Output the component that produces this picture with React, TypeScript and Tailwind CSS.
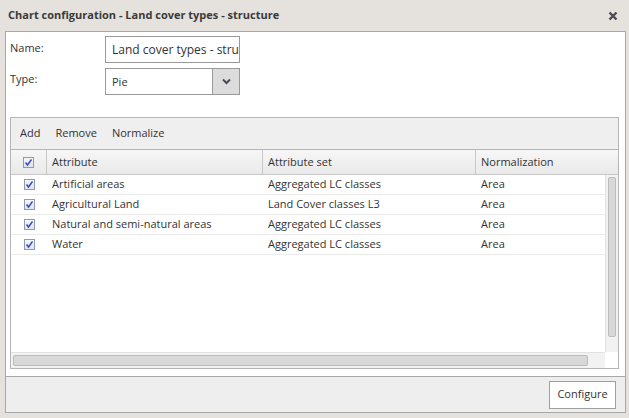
import React from 'react';

const rows = [
  { attr: 'Artificial areas', set: 'Aggregated LC classes', norm: 'Area' },
  { attr: 'Agricultural Land', set: 'Land Cover classes L3', norm: 'Area' },
  { attr: 'Natural and semi-natural areas', set: 'Aggregated LC classes', norm: 'Area' },
  { attr: 'Water', set: 'Aggregated LC classes', norm: 'Area' },
];

const Check = () => (
  <div className="w-[11px] h-[11px] border border-[#8e9bb3] bg-gradient-to-b from-[#f4f6fa] to-[#dde3ec] flex items-center justify-center">
    <svg width="9" height="9" viewBox="0 0 9 9">
      <path d="M1.5 4.5 L3.5 7 L7.5 1.5" fill="none" stroke="#3347c0" strokeWidth="1.4" />
    </svg>
  </div>
);

const App = () => {
  return (
    <div
      className="w-[629px] h-[418px] bg-[#e5e1dd] flex flex-col pl-[5px] pr-[3px] text-[#333] text-[11px]"
      style={{ fontFamily: '"Open Sans", "Liberation Sans", sans-serif' }}
    >
      <div className="h-[31px] flex items-center justify-between pl-[3px] pr-[8px]">
        <span className="font-bold text-[11px] text-[#3a3a3a]">Chart configuration - Land cover types - structure</span>
        <svg width="10" height="10" viewBox="0 0 10 10">
          <path d="M1.5 1.5 L8.5 8.5 M8.5 1.5 L1.5 8.5" stroke="#4a4a55" strokeWidth="2.4" />
        </svg>
      </div>

      <div className="h-[346px] border border-[#a8a8a8] bg-white flex flex-col pl-[4px] pr-[6px] pt-[4px]">
        <div className="flex h-[27px]">
          <div className="w-[95px] pt-[4px]">Name:</div>
          <input
            readOnly
            value="Land cover types - structure"
            className="w-[135px] h-[27px] border border-[#9a9a9a] pl-[6px] text-[12px] text-[#333] outline-none"
            style={{ fontFamily: '"Open Sans", "Liberation Sans", sans-serif' }}
          />
        </div>
        <div className="flex h-[27px] mt-[5px]">
          <div className="w-[95px] pt-[3px]">Type:</div>
          <div className="w-[135px] border border-[#9a9a9a] flex">
            <div className="flex-1 flex items-center pl-[6px] pt-[2px]">Pie</div>
            <div className="w-[27px] border-l border-[#9a9a9a] bg-[#dcdcdc] flex items-center justify-center">
              <svg width="9" height="7" viewBox="0 0 9 7">
                <path d="M1 1.5 L4.5 5 L8 1.5" fill="none" stroke="#4a4a55" strokeWidth="2" />
              </svg>
            </div>
          </div>
        </div>

        <div className="mt-[22px] h-[252px] border border-[#b5b5b5] flex flex-col">
          <div className="h-[32px] bg-[#efefef] flex items-center gap-[15px] pl-[9px] border-b border-[#b5b5b5]">
            <span>Add</span>
            <span>Remove</span>
            <span>Normalize</span>
          </div>
          <div className="h-[25px] flex bg-gradient-to-b from-[#f7f7f7] to-[#e9e9e9] border-b border-[#c8c8c8]">
            <div className="w-[36px] border-r border-[#c8c8c8] flex items-center justify-center">
              <Check />
            </div>
            <div className="w-[216px] border-r border-[#c8c8c8] flex items-center pl-[5px]">Attribute</div>
            <div className="w-[213px] border-r border-[#c8c8c8] flex items-center pl-[5px]">Attribute set</div>
            <div className="flex-1 flex items-center pl-[5px]">Normalization</div>
          </div>
          <div className="flex-1 flex min-h-0">
            <div className="flex-1 flex flex-col">
              {rows.map((r) => (
                <div key={r.attr} className="h-[20px] flex border-b border-[#ececec]">
                  <div className="w-[36px] flex items-center justify-center">
                    <Check />
                  </div>
                  <div className="w-[216px] flex items-center pl-[5px]">{r.attr}</div>
                  <div className="w-[213px] flex items-center pl-[5px]">{r.set}</div>
                  <div className="flex-1 flex items-center pl-[5px]">{r.norm}</div>
                </div>
              ))}
            </div>
            <div className="w-[13px] bg-[#f2f2f2] border-l border-[#e2e2e2] p-[2px]">
              <div className="h-[160px] bg-[#d8d8d8] border border-[#bcbcbc] rounded-[2px]" />
            </div>
          </div>
          <div className="h-[16px] flex">
            <div className="flex-1 bg-[#f2f2f2] border-t border-[#e2e2e2] p-[2px]">
              <div className="w-[575px] h-full bg-[#d8d8d8] border border-[#bcbcbc] rounded-[2px]" />
            </div>
            <div className="w-[13px] bg-white" />
          </div>
        </div>
      </div>

      <div className="h-[36px] border border-t-0 border-[#a8a8a8] bg-[#eeeeee] flex items-center justify-end pr-[9px]">
        <div className="w-[67px] h-[28px] border border-[#a0a0a0] bg-white flex items-center justify-center">
          Configure
        </div>
      </div>
    </div>
  );
};

export default App;
